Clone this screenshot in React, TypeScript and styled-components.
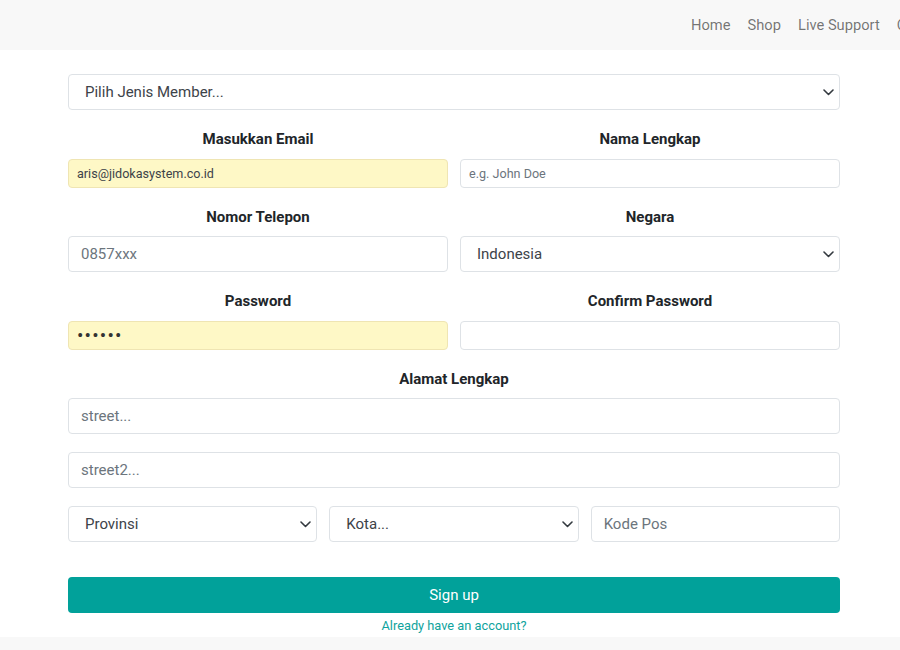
import React from 'react';
import styled, { createGlobalStyle } from 'styled-components';

const GlobalStyle = createGlobalStyle`
    html, body {
        margin: 0;
        padding: 0;
        background: #ffffff;
        overflow: hidden;
    }
    body {
        font-family: Roboto, "Liberation Sans", Arial, sans-serif;
        color: #212529;
    }
    * {
        box-sizing: border-box;
    }
`;

export default function App() {
    return (
        <>
            <GlobalStyle />
            <Header>
                <BrandSpace />
                <Nav>
                    <NavLink>Home</NavLink>
                    <NavLink>Shop</NavLink>
                    <NavLink>Live Support</NavLink>
                    <NavLink>Cart</NavLink>
                </Nav>
            </Header>

            <Main>
                <SelectBox>
                    <option>Pilih Jenis Member...</option>
                </SelectBox>

                <Row cols={2}>
                    <Field>
                        <Label>Masukkan Email</Label>
                        <Input small autofill defaultValue="aris@jidokasystem.co.id" />
                    </Field>
                    <Field>
                        <Label>Nama Lengkap</Label>
                        <Input small placeholder="e.g. John Doe" />
                    </Field>
                </Row>

                <Row cols={2}>
                    <Field>
                        <Label>Nomor Telepon</Label>
                        <Input placeholder="0857xxx" />
                    </Field>
                    <Field>
                        <Label>Negara</Label>
                        <SelectBox>
                            <option>Indonesia</option>
                        </SelectBox>
                    </Field>
                </Row>

                <Row cols={2}>
                    <Field>
                        <Label>Password</Label>
                        <PasswordInput small autofill type="password" defaultValue="aris12" />
                    </Field>
                    <Field>
                        <Label>Confirm Password</Label>
                        <PasswordInput small type="password" />
                    </Field>
                </Row>

                <Field>
                    <Label>Alamat Lengkap</Label>
                    <Input placeholder="street..." />
                </Field>

                <Input placeholder="street2..." />

                <Row cols={3}>
                    <SelectBox>
                        <option>Provinsi</option>
                    </SelectBox>
                    <SelectBox>
                        <option>Kota...</option>
                    </SelectBox>
                    <Input placeholder="Kode Pos" />
                </Row>

                <SubmitArea>
                    <SignUpButton>Sign up</SignUpButton>
                    <LoginLink>Already have an account?</LoginLink>
                </SubmitArea>
            </Main>

            <Footer />
        </>
    );
}

interface SelectBoxProps {
    children: React.ReactNode;
}
const SelectBox: React.FC<SelectBoxProps> = ({ children }) => {
    return (
        <SelectWrap>
            <Select>{children}</Select>
            <Chevron width="11" height="7" viewBox="0 0 11 7">
                <path d="M1 1l4.5 4.5L10 1" fill="none" stroke="#343a40" strokeWidth="1.6" strokeLinecap="round" strokeLinejoin="round" />
            </Chevron>
        </SelectWrap>
    );
}

const Header = styled.header`
    display: flex;
    align-items: center;
    height: 50px;
    background: #f8f8f8;
    overflow: hidden;
    white-space: nowrap;
`;

const BrandSpace = styled.div`
    flex: 0 0 682.5px;
`;

const Nav = styled.nav`
    display: flex;
    flex-shrink: 0;
    margin-top: -1px;
`;

const NavLink = styled.a`
    padding: 0 8.5px;
    font-size: 14.7px;
    line-height: 24px;
    color: rgba(0, 0, 0, 0.55);
    cursor: pointer;
`;

const Main = styled.main`
    display: flex;
    flex-direction: column;
    gap: 18px;
    width: 772px;
    margin: 0 68px;
    padding: 24px 0 3px;
`;

const Row = styled.div<{ cols: number }>`
    display: grid;
    grid-template-columns: repeat(${props => props.cols}, 1fr);
    column-gap: 12px;
`;

const Field = styled.div`
    display: flex;
    flex-direction: column;
`;

const Label = styled.label`
    display: block;
    text-align: center;
    font-size: 15px;
    font-weight: 700;
    line-height: 22px;
    margin-bottom: 8.5px;
    color: #212529;
`;

const Input = styled.input<{ small?: boolean; autofill?: boolean }>`
    display: block;
    width: 100%;
    height: ${props => props.small ? '29px' : '36px'};
    padding: 0 ${props => props.small ? '8px' : '12px'};
    font-family: Roboto, "Liberation Sans", Arial, sans-serif;
    font-size: ${props => props.small ? '12.6px' : '15px'};
    color: #3d4349;
    background: ${props => props.autofill ? '#fef8c6' : '#ffffff'};
    border: 1px solid ${props => props.autofill ? '#efe5b3' : '#dee2e6'};
    border-radius: 4px;
    outline: none;
    &::placeholder {
        color: #6c757d;
    }
`;

const PasswordInput = styled(Input)`
    font-size: 19px;
    letter-spacing: 1.2px;
    color: #333333;
`;

const SelectWrap = styled.div`
    position: relative;
    width: 100%;
`;

const Select = styled.select`
    display: block;
    width: 100%;
    height: 36px;
    padding: 0 36px 0 16px;
    font-family: Roboto, "Liberation Sans", Arial, sans-serif;
    font-size: 15px;
    color: #3d4349;
    background: #ffffff;
    border: 1px solid #dee2e6;
    border-radius: 4px;
    appearance: none;
    outline: none;
`;

const Chevron = styled.svg`
    position: absolute;
    right: 6px;
    top: 15px;
    pointer-events: none;
`;

const SubmitArea = styled.div`
    display: flex;
    flex-direction: column;
    align-items: center;
    margin-top: 17px;
`;

const SignUpButton = styled.button`
    width: 100%;
    height: 36px;
    border: none;
    border-radius: 4px;
    background: #01a19a;
    color: #ffffff;
    font-family: Roboto, "Liberation Sans", Arial, sans-serif;
    font-size: 15px;
    cursor: pointer;
`;

const LoginLink = styled.a`
    margin-top: 5px;
    font-size: 12.8px;
    line-height: 16px;
    color: #0fa39d;
    cursor: pointer;
`;

const Footer = styled.footer`
    height: 40px;
    background: #f8f8f8;
`;
